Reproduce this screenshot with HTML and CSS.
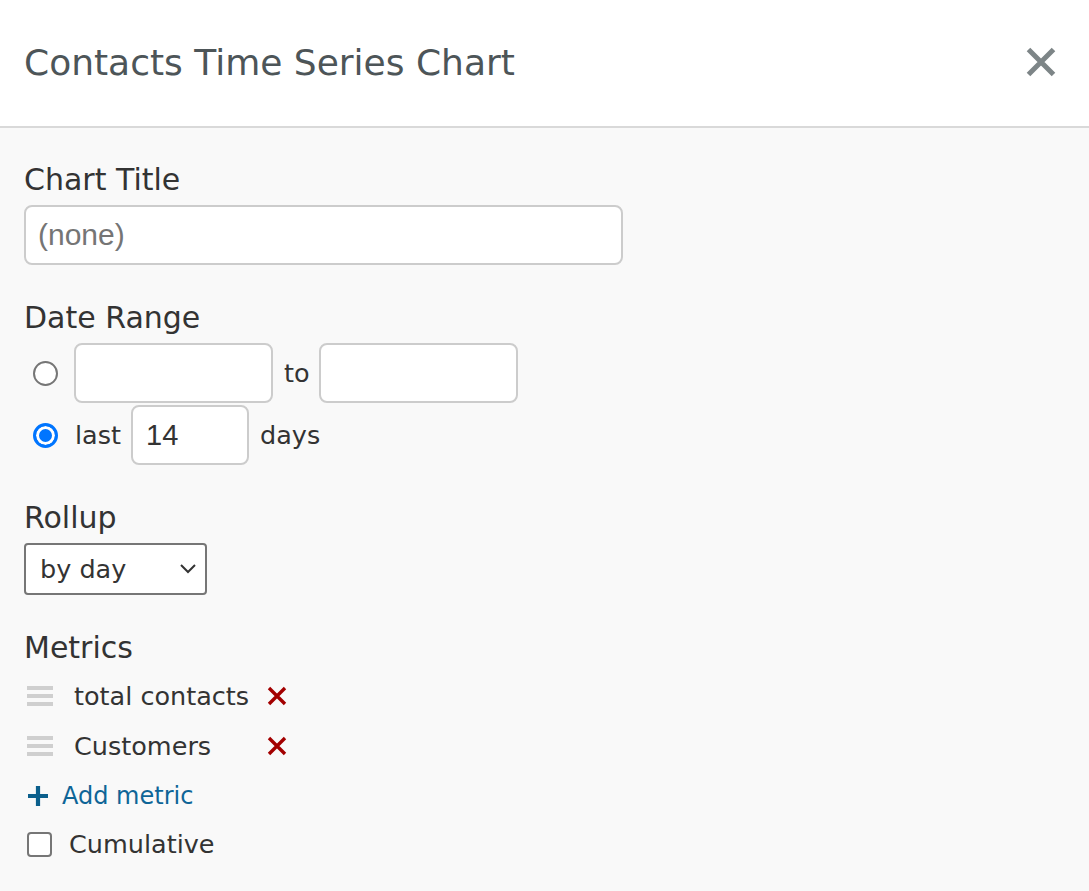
FILE: index.html
```html
<!DOCTYPE html>
<html>
<head>
<meta charset="utf-8">
<link rel="stylesheet" href="styles.css">
</head>
<body>
<div class="dialog">
  <header class="head">
    <h1 class="title">Contacts Time Series Chart</h1>
    <button class="close" aria-label="Close">
      <svg width="30" height="30" viewBox="0 0 30 30"><path d="M2.5 2.5 L27.5 27.5 M27.5 2.5 L2.5 27.5" stroke="#7d8587" stroke-width="5" fill="none"/></svg>
    </button>
  </header>
  <main class="body">
    <section class="field">
      <label class="label">Chart Title</label>
      <input class="text wide" type="text" placeholder="(none)">
    </section>

    <section class="field">
      <label class="label">Date Range</label>
      <div class="row">
        <span class="radio"></span>
        <input class="text date" type="text">
        <span class="word to">to</span>
        <input class="text date" type="text">
      </div>
      <div class="row row2">
        <span class="radio checked"></span>
        <span class="word last">last</span>
        <input class="text days" type="text" value="14">
        <span class="word">days</span>
      </div>
    </section>

    <section class="field">
      <label class="label">Rollup</label>
      <div class="select">
        <span>by day</span>
        <svg width="18" height="12" viewBox="0 0 18 12"><path d="M2 2 L9 9 L16 2" stroke="#333" stroke-width="2" fill="none"/></svg>
      </div>
    </section>

    <section class="field">
      <label class="label">Metrics</label>
      <div class="metrics">
        <div class="metric">
          <span class="grip"><i></i><i></i><i></i></span>
          <span class="name">total contacts</span>
          <svg class="del" width="20" height="20" viewBox="0 0 20 20"><path d="M2 2 L18 18 M18 2 L2 18" stroke="#a30000" stroke-width="3.4" fill="none"/></svg>
        </div>
        <div class="metric">
          <span class="grip"><i></i><i></i><i></i></span>
          <span class="name">Customers</span>
          <svg class="del" width="20" height="20" viewBox="0 0 20 20"><path d="M2 2 L18 18 M18 2 L2 18" stroke="#a30000" stroke-width="3.4" fill="none"/></svg>
        </div>
      </div>
      <a class="add">
        <svg width="22" height="22" viewBox="0 0 22 22"><path d="M11 1 V21 M1 11 H21" stroke="#0b5f8c" stroke-width="4.2" fill="none"/></svg>
        <span>Add metric</span>
      </a>
      <div class="check">
        <span class="box"></span>
        <span class="word">Cumulative</span>
      </div>
    </section>
  </main>
</div>
</body>
</html>
```
FILE: styles.css
```css
html, body {
  margin: 0;
  padding: 0;
  background: #f9f9f9;
}
body {
  font-family: "DejaVu Sans", Verdana, sans-serif;
  color: #333;
  width: 1089px;
  height: 891px;
  overflow: hidden;
}
.head {
  height: 126px;
  background: #fff;
  border-bottom: 2px solid #d9d9d9;
  display: flex;
  align-items: center;
  justify-content: space-between;
  padding: 0 33px 0 24px;
}
.title {
  margin: 0 0 2px 0;
  font-weight: 400;
  font-size: 36px;
  color: #4d5558;
}
.close {
  border: 0;
  background: none;
  padding: 0;
  width: 30px;
  height: 30px;
  display: flex;
  margin-bottom: 2px;
}
.body {
  padding: 34px 24px 0 24px;
}
.field {
  display: flex;
  flex-direction: column;
  align-items: flex-start;
  margin-bottom: 35px;
}
.label {
  font-size: 30px;
  line-height: 36px;
  color: #333;
  margin-bottom: 7px;
}
.text {
  box-sizing: border-box;
  height: 60px;
  border: 2px solid #ccc;
  border-radius: 8px;
  background: #fff;
  font-family: "Liberation Sans", Arial, sans-serif;
  font-size: 30px;
  padding: 0 12px;
  color: #333;
  outline: none;
  margin: 0;
}
.text::placeholder {
  color: #757575;
}
.wide {
  width: 599px;
}
.row {
  display: flex;
  align-items: center;
}
.row2 {
  margin-top: 2px;
}
.radio {
  box-sizing: border-box;
  width: 25px;
  height: 25px;
  border-radius: 50%;
  border: 2px solid #767676;
  background: #fff;
  margin: 0 16px 0 9px;
  flex: none;
}
.radio.checked {
  border: 3px solid #0075ff;
  background: #0075ff;
  box-shadow: inset 0 0 0 3px #fff;
}
.word {
  font-size: 25.5px;
  line-height: 36px;
  color: #333;
}
.date {
  width: 199px;
}
.to {
  margin: 0 9px 0 11px;
}
.last {
  margin: 0 10px 0 1px;
}
.days {
  width: 118px;
  font-size: 29px;
  padding: 0 13px;
  margin-right: 11px;
}
.select {
  box-sizing: border-box;
  width: 183px;
  height: 52px;
  border: 2px solid #767676;
  border-radius: 4px;
  background: #fff;
  display: flex;
  align-items: center;
  justify-content: space-between;
  padding: 0 8px 0 14px;
  font-size: 25.5px;
  color: #333;
}
.metrics {
  margin-top: -2px;
}
.metric {
  display: flex;
  align-items: center;
  height: 50px;
}
.grip {
  width: 26px;
  margin: 0 21px 0 3px;
  display: flex;
  flex-direction: column;
  gap: 4px;
}
.grip i {
  display: block;
  height: 4px;
  background: #cfcfcf;
}
.name {
  width: 193px;
  font-size: 25.5px;
  line-height: 36px;
  color: #333;
}
.add {
  display: flex;
  align-items: center;
  height: 49px;
  color: #0e6597;
  font-size: 24px;
  cursor: pointer;
}
.add svg {
  margin: 0 13px 0 3px;
}
.check {
  display: flex;
  align-items: center;
  height: 48px;
}
.box {
  box-sizing: border-box;
  width: 25px;
  height: 25px;
  border: 2px solid #767676;
  border-radius: 4px;
  background: #fff;
  margin: 0 17px 0 3px;
}
```
